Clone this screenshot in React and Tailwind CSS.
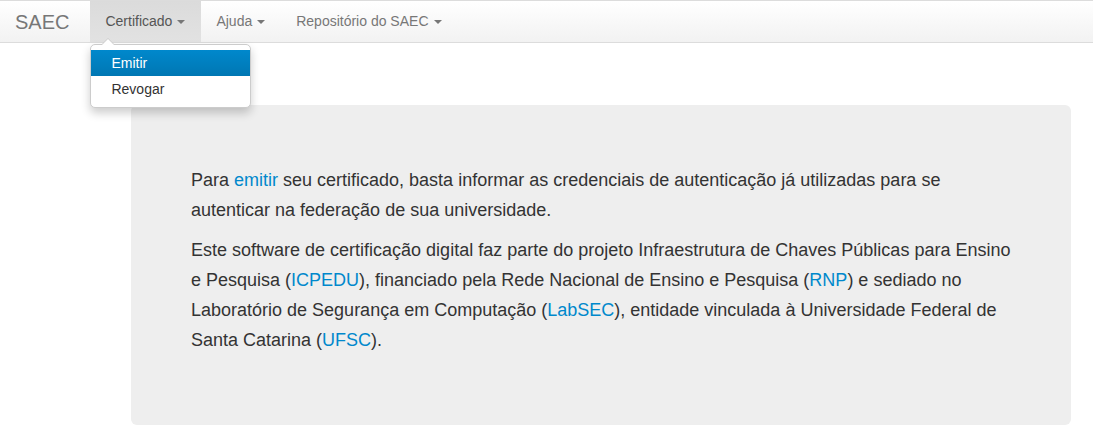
const font = { fontFamily: '"Liberation Sans", Arial, sans-serif' };

function Caret() {
  return <span className="ml-[5px] inline-block w-0 h-0 border-x-[4px] border-x-transparent border-t-[4px] border-t-[#777] align-middle" />;
}

const links = 'text-[#0088cc]';

export default function App() {
  return (
    <div className="min-h-[446px] bg-white text-[#333]" style={font}>
      {/* Navbar */}
      <nav className="relative h-[43px] border-y border-[#dcdcdc] bg-gradient-to-b from-white to-[#f2f2f2] flex items-stretch">
        <a className="pl-[15px] pr-[21px] flex items-center text-[20px] text-[#777]">SAEC</a>
        <div className="relative flex">
          <a className="pl-[15px] pr-[16px] flex items-center text-[14px] text-[#555] bg-gradient-to-b from-[#dbdbdb] to-[#e2e2e2]">
            Certificado<Caret />
          </a>
          {/* Dropdown */}
          <div className="absolute left-0 top-[43px] w-[161px] z-10">
            <span className="absolute -top-[6px] left-[11px] w-0 h-0 border-x-[7px] border-x-transparent border-b-[7px] border-b-[#ccc]" />
            <span className="absolute -top-[5px] left-[12px] w-0 h-0 border-x-[6px] border-x-transparent border-b-[6px] border-b-white" />
            <div className="bg-white border border-[#ccc] rounded-[5px] shadow-[0_5px_10px_rgba(0,0,0,0.2)] py-[5px]">
              <div className="h-[26px] flex items-center px-5 text-[14px] text-white bg-gradient-to-b from-[#0088cc] to-[#0077b3]">Emitir</div>
              <div className="h-[26px] flex items-center px-5 text-[14px] text-[#333]">Revogar</div>
            </div>
          </div>
        </div>
        <a className="pl-[15px] pr-[16px] flex items-center text-[14px] text-[#777]">
          Ajuda<Caret />
        </a>
        <a className="pl-[15px] pr-[16px] flex items-center text-[14px] text-[#777]">
          Repositório do SAEC<Caret />
        </a>
      </nav>

      {/* Jumbotron */}
      <div className="ml-[131px] mr-[22px] mt-[62px] bg-[#eeeeee] rounded-[6px] px-[60px] pt-[60px] pb-[70px] min-h-[319px] text-[18px] leading-[30px] text-[#333]">
        <p className="mb-[10px]">
          Para <a className={links}>emitir</a> seu certificado, basta informar as credenciais de autenticação já utilizadas para se autenticar na federação de sua universidade.
        </p>
        <p>
          Este software de certificação digital faz parte do projeto Infraestrutura de Chaves Públicas para Ensino e Pesquisa (<a className={links}>ICPEDU</a>), financiado pela Rede Nacional de Ensino e Pesquisa (<a className={links}>RNP</a>) e sediado no Laboratório de Segurança em Computação (<a className={links}>LabSEC</a>), entidade vinculada à Universidade Federal de Santa Catarina (<a className={links}>UFSC</a>).
        </p>
      </div>
    </div>
  );
}
